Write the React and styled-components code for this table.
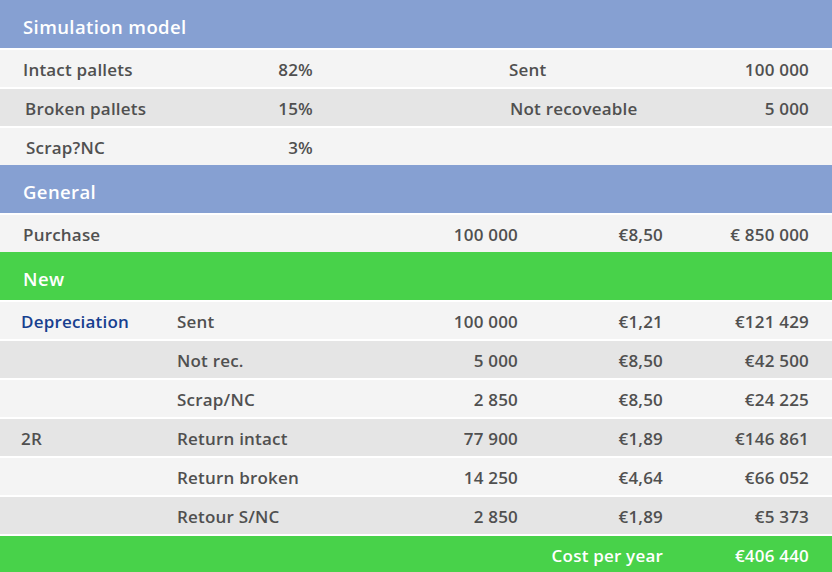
import styled, { createGlobalStyle } from "styled-components";

const GlobalStyle = createGlobalStyle`
    html, body {
        margin: 0;
        padding: 0;
        background: #ffffff;
    }
    body {
        font-family: "Open Sans", "Liberation Sans", sans-serif;
        color: #505050;
    }
`;

const simRows = [
    { label: "Intact pallets", value: "82%", label2: "Sent", value2: "100 000", indent: 0 },
    { label: "Broken pallets", value: "15%", label2: "Not recoveable", value2: "5 000", indent: 2 },
    { label: "Scrap?NC", value: "3%", label2: "", value2: "", indent: 3 },
];

const newRows = [
    { group: "Depreciation", blue: true, label: "Sent", qty: "100 000", price: "€1,21", total: "€121 429" },
    { group: "", label: "Not rec.", qty: "5 000", price: "€8,50", total: "€42 500" },
    { group: "", label: "Scrap/NC", qty: "2 850", price: "€8,50", total: "€24 225" },
    { group: "2R", label: "Return intact", qty: "77 900", price: "€1,89", total: "€146 861" },
    { group: "", label: "Return broken", qty: "14 250", price: "€4,64", total: "€66 052" },
    { group: "", label: "Retour S/NC", qty: "2 850", price: "€1,89", total: "€5 373" },
];

export default function App() {
    return (
        <>
            <GlobalStyle />
            <Sheet>
                <Header>Simulation model</Header>
                {simRows.map((r, i) => (
                    <SimRow key={r.label} $dark={i % 2 === 1}>
                        <Label $indent={r.indent}>{r.label}</Label>
                        <Num>{r.value}</Num>
                        <span />
                        <Label $indent={r.indent ? 1 : 0}>{r.label2}</Label>
                        <Num>{r.value2}</Num>
                    </SimRow>
                ))}

                <Header>General</Header>
                <CostRow>
                    <Label>Purchase</Label>
                    <span />
                    <Num>100 000</Num>
                    <Num>€8,50</Num>
                    <Num>€ 850 000</Num>
                </CostRow>

                <Header $green>New</Header>
                {newRows.map((r, i) => (
                    <CostRow key={r.label} $dark={i % 2 === 1}>
                        <Group $blue={r.blue}>{r.group}</Group>
                        <Label>{r.label}</Label>
                        <Num>{r.qty}</Num>
                        <Num>{r.price}</Num>
                        <Num>{r.total}</Num>
                    </CostRow>
                ))}

                <TotalRow>
                    <span />
                    <span />
                    <span />
                    <Num>Cost per year</Num>
                    <Num>€406 440</Num>
                </TotalRow>
            </Sheet>
        </>
    );
}

const Sheet = styled.div`
    width: 832px;
    height: 572px;
    overflow: hidden;
    display: flex;
    flex-direction: column;
    font-size: 17px;
    font-weight: 600;
    letter-spacing: 0.2px;
`;

const Header = styled.div`
    height: 48px;
    flex: none;
    box-sizing: border-box;
    display: flex;
    align-items: center;
    padding: 4px 23px 0;
    background: ${(p) => (p.$green ? "#48d24a" : "#86a0d2")};
    color: #ffffff;
    font-size: 18.5px;
    font-weight: 600;
    letter-spacing: 0.4px;
`;

const Row = styled.div`
    flex: none;
    box-sizing: content-box;
    height: 35px;
    border-top: 2px solid #ffffff;
    padding: 2px 23px 0;
    display: grid;
    align-items: center;
    background: ${(p) => (p.$dark ? "#e5e5e5" : "#f4f4f4")};
`;

const SimRow = styled(Row)`
    grid-template-columns: 200px 90px 196px 180px 120px;
`;

const CostRow = styled(Row)`
    grid-template-columns: 154px 221px 120px 145px 146px;
`;

const TotalRow = styled(CostRow)`
    background: #48d24a;
    color: #ffffff;
`;

const Label = styled.span`
    padding-left: ${(p) => p.$indent || 0}px;
    white-space: nowrap;
`;

const Group = styled.span`
    margin-left: -2px;
    color: ${(p) => (p.$blue ? "#173f8f" : "inherit")};
`;

const Num = styled.span`
    text-align: right;
    white-space: nowrap;
`;
